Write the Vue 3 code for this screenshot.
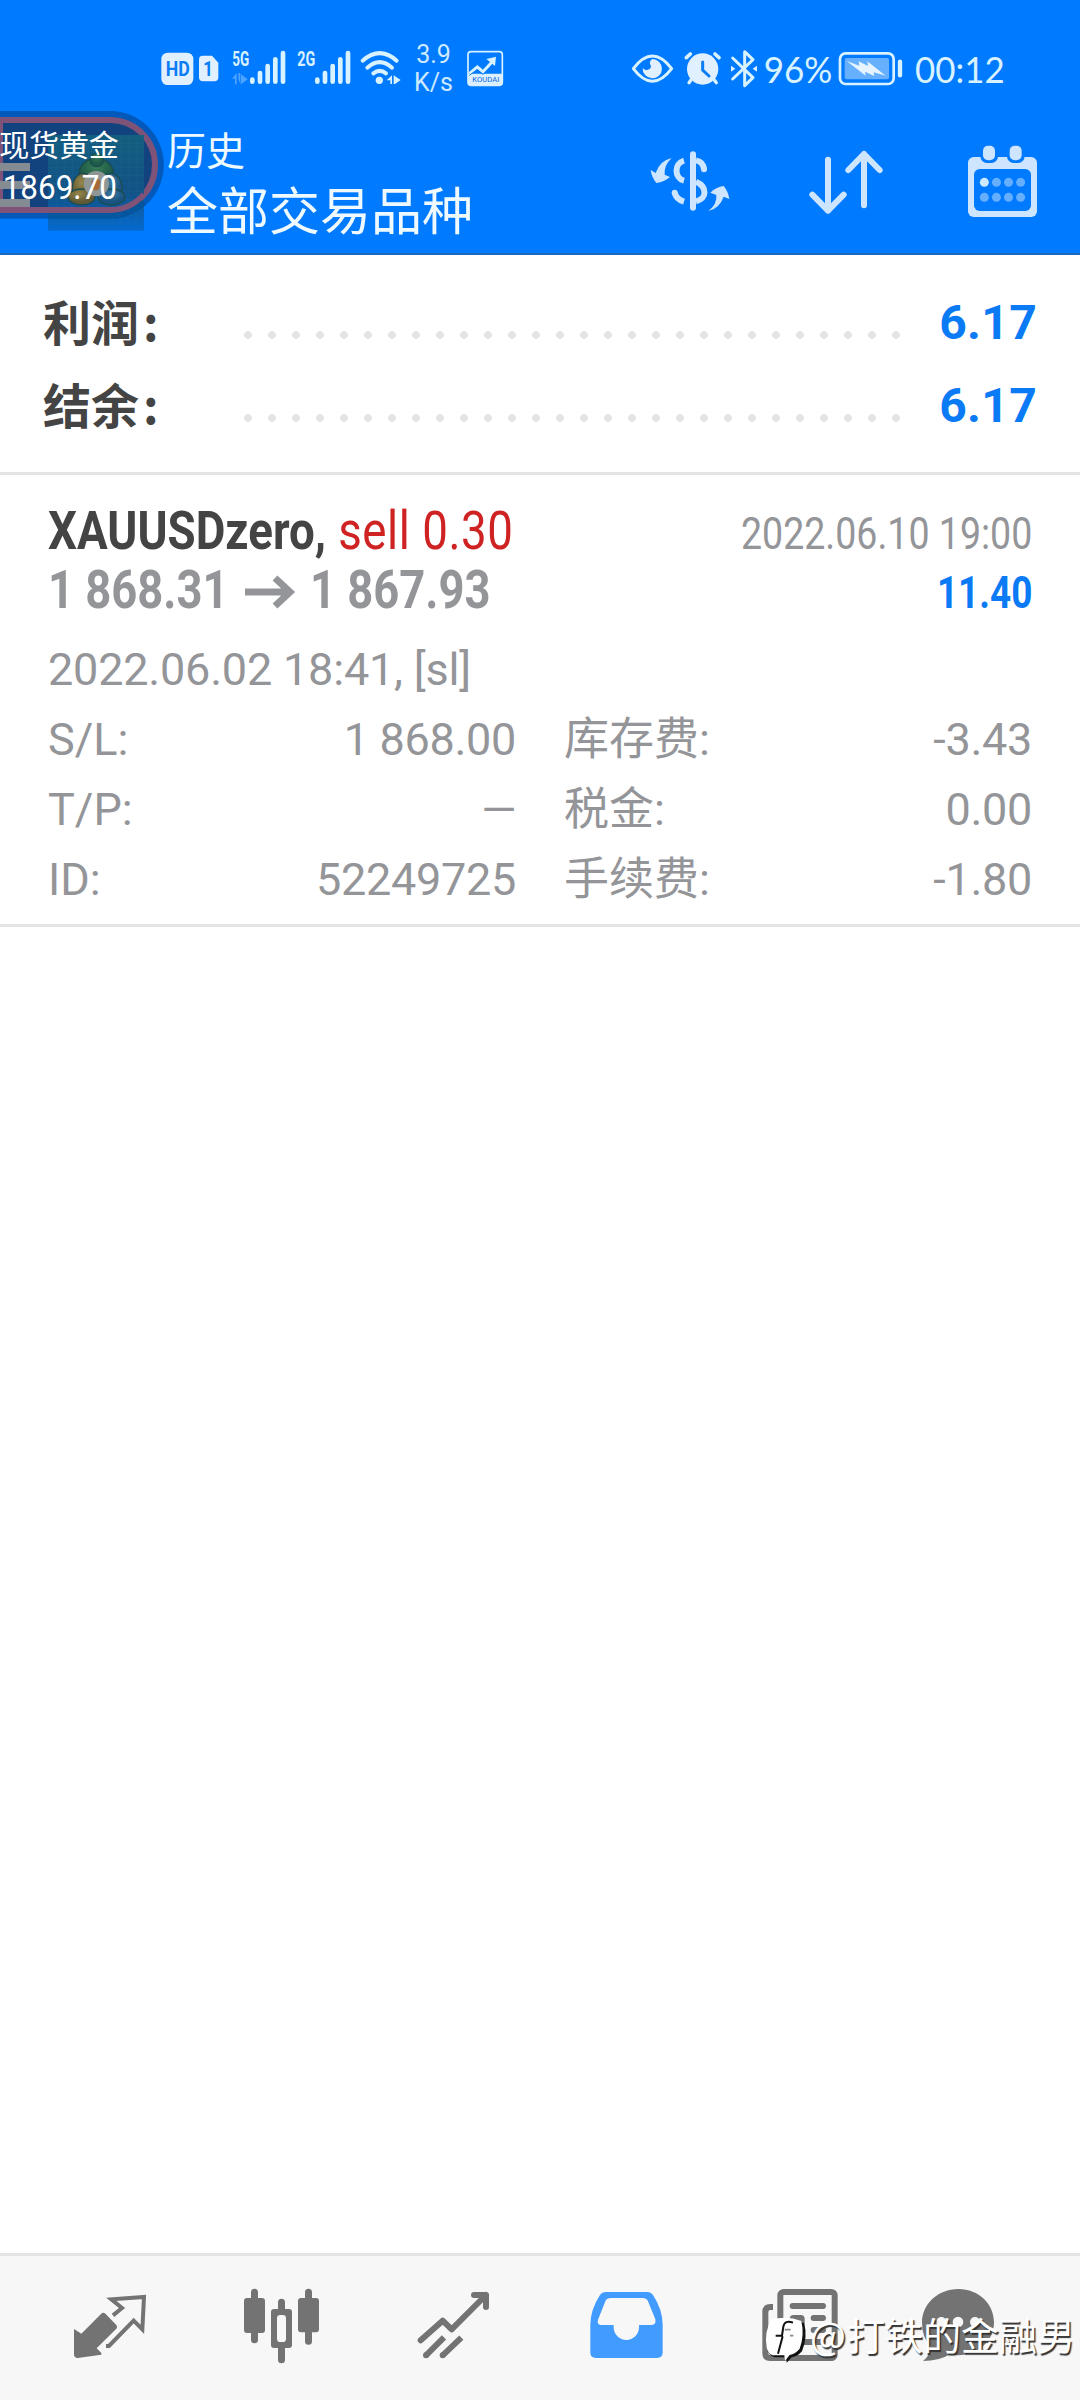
<script setup>
const summary = [
  { label: '利润', value: '6.17' },
  { label: '结余', value: '6.17' },
]
const details = [
  { k: 'S/L:', v: '1 868.00', k2: '库存费:', v2: '-3.43' },
  { k: 'T/P:', v: '—', k2: '税金:', v2: '0.00' },
  { k: 'ID:', v: '52249725', k2: '手续费:', v2: '-1.80' },
]
const bars = [330, 353, 376, 399, 422]
const barTops = [142, 122, 101, 81, 62]
</script>

<template>
  <div class="screen">
    <header class="top">
      <div class="status">
        <div class="cluster">
          <svg width="85" height="80" viewBox="0 0 255 240">
            <rect x="64" y="68" width="96" height="97" rx="19" fill="#e0f0ff" />
            <text x="77" y="138" textLength="72" lengthAdjust="spacingAndGlyphs" font-size="60" font-weight="700" fill="#0a7cf5">HD</text>
            <path d="M188 77h28l19 21v44q0 12-12 12h-34q-12 0-12-12V89q0-12 11-12z" fill="#e0f0ff" />
            <text x="190" y="139" font-size="62" font-weight="700" textLength="29" lengthAdjust="spacingAndGlyphs" fill="#0a7cf5">1</text>
          </svg>
          <svg width="65" height="80" viewBox="255 0 195 240">
            <text x="277" y="107" font-size="60" font-weight="700" textLength="51" lengthAdjust="spacingAndGlyphs" fill="#d8f2ff">5G</text>
            <path d="M276 146l14-17v34h-5v-17zM295 146v-17h6v34zM303 133l20 15-20 15z" fill="#4da3ff" />
            <rect v-for="(x, i) in bars" :key="x" :x="x" :y="barTops[i]" width="14" :height="162 - barTops[i]" rx="7" fill="#d8f2ff" />
          </svg>
          <svg width="65" height="80" viewBox="450 0 195 240">
            <text x="472" y="107" font-size="60" font-weight="700" textLength="54" lengthAdjust="spacingAndGlyphs" fill="#d8f2ff">2G</text>
            <rect v-for="(x, i) in bars" :key="x" :x="x + 195" :y="barTops[i]" width="14" :height="162 - barTops[i]" rx="7" fill="#d8f2ff" />
          </svg>
          <svg width="50" height="80" viewBox="645 0 150 240">
            <g fill="none" stroke="#d8f2ff" stroke-width="12" stroke-linecap="round">
              <path d="M668 92Q719 47 770 92" />
              <path d="M682 113Q719 80 756 113" />
              <path d="M700 130Q719 115 738 130" />
            </g>
            <circle cx="718" cy="151" r="11" fill="#d8f2ff" />
            <path d="M740 151l16-15v26h-5v-11zM761 136l21 14-17 12h-4z" fill="#d8f2ff" />
          </svg>
          <div class="speed"><span>3.9</span><span>K/s</span></div>
          <svg width="50" height="80" viewBox="960 0 150 240">
            <rect x="984" y="65" width="103" height="101" rx="9" fill="none" stroke="#d8f2ff" stroke-width="5" />
            <path d="M984 131h103v30q0 6-6 6h-91q-6 0-6-6z" fill="#dcefff" />
            <path d="M988 131l24-20 17 14 29-31" fill="none" stroke="#d8f2ff" stroke-width="9" />
            <path d="M1068 80l-3 28-26-21z" fill="#d8f2ff" />
            <path d="M988 136l23-17 17 14 9-6" fill="none" stroke="#0a7cf5" stroke-width="3" />
            <text x="997" y="157" font-size="23" textLength="81" lengthAdjust="spacingAndGlyphs" fill="#0a6be0">KOUDAI</text>
          </svg>
        </div>
        <div class="cluster">
          <svg width="60" height="80" viewBox="0 0 180 240">
            <path d="M40 116Q97 40 155 116Q97 192 40 116z" fill="none" stroke="#d8f2ff" stroke-width="9" stroke-linejoin="round" />
            <path d="M97 87a29 29 0 1 1-29 27q7 9 16 5 14-5 6-17-2-9 7-15z" fill="#e0f0ff" />
          </svg>
          <svg width="45" height="80" viewBox="180 0 135 240">
            <circle cx="248" cy="117" r="47" fill="#e0f0ff" />
            <path d="M199 83l12-11M285 72l12 11" stroke="#d8f2ff" stroke-width="11" stroke-linecap="round" />
            <path d="M213 150l-6 8M283 150l6 8" stroke="#d8f2ff" stroke-width="10" stroke-linecap="round" />
            <path d="M248 96v24l19 18" fill="none" stroke="#0a7cf5" stroke-width="9" stroke-linecap="round" />
          </svg>
          <svg width="35" height="80" viewBox="315 0 105 240">
            <path d="M338 84l61 59-25 24V65l25 24-61 58" fill="none" stroke="#d8f2ff" stroke-width="9" stroke-linecap="round" stroke-linejoin="round" />
            <path d="M333 107l13 9-13 9zM411 107l-13 9 13 9z" fill="#d8f2ff" />
          </svg>
          <svg width="75" height="80" viewBox="420 0 225 240">
            <text class="clock" x="431" y="160" font-size="112" textLength="206" lengthAdjust="spacingAndGlyphs">96%</text>
          </svg>
          <svg width="75" height="80" viewBox="645 0 225 240">
            <rect x="660" y="70" width="161" height="92" rx="17" fill="none" stroke="#d8f2ff" stroke-width="8" />
            <rect x="674" y="84" width="133" height="64" rx="6" fill="#66b0ff" />
            <path d="M680 93l38 14-2-13 28 14-2-14 55 43-36-10 2 11-28-13 2 12z" fill="#e6f4ff" />
            <path d="M840 95v41" stroke="#d8f2ff" stroke-width="13" stroke-linecap="round" />
          </svg>
          <svg width="100" height="80" viewBox="870 0 300 240">
            <text class="clock" x="885" y="160" font-size="112" textLength="269" lengthAdjust="spacingAndGlyphs">00:12</text>
          </svg>
        </div>
      </div>

      <div class="toolbar">
        <div class="titles">
          <span class="small">历史</span>
          <span class="large">全部交易品种</span>
        </div>
        <div class="actions">
          <svg width="153" height="140" viewBox="0 0 459 420" fill="none" stroke="#cde5ff">
            <path d="M192 122C162 130 162 174 192 182M164 218Q168 238 192 245" stroke-width="18" />
            <path d="M164 218h.1M219 103V263M252 148h.1" stroke-width="18" stroke-linecap="round" />
            <path d="M228 121Q250 125 252 148M228 185C262 200 262 236 228 244" stroke-width="18" />
            <path d="M155 114Q131 137 134 164l16 7q-17 15-41 18-14-17-17-39l15 9q12-37 48-45zM265 273q27-20 24-48l-18-7q17-17 40-20 14 17 17 39l-17-7q-12 35-46 43z" fill="#cde5ff" stroke="none" />
          </svg>
          <svg width="154" height="140" viewBox="459 0 462 420" fill="none" stroke="#cde5ff" stroke-width="18" stroke-linecap="round" stroke-linejoin="round">
            <path d="M624 119V272M577 224l47 48 47-48M732 256V102M685 150l47-48 47 48" />
          </svg>
          <svg width="153" height="140" viewBox="921 0 459 420">
            <rect x="1044" y="111" width="207" height="180" rx="17" fill="#cde5ff" />
            <rect x="1062" y="147" width="171" height="126" rx="17" fill="#007aff" />
            <rect x="1081" y="68" width="53" height="61" rx="20" fill="#007aff" />
            <rect x="1161" y="68" width="53" height="61" rx="20" fill="#007aff" />
            <rect x="1089" y="77" width="36" height="44" rx="15" fill="#cde5ff" />
            <rect x="1169" y="77" width="36" height="44" rx="15" fill="#cde5ff" />
            <circle v-for="n in 8" :key="n" :cx="1093 + ((n - 1) % 4) * 36.3" :cy="n > 4 ? 232 : 187" r="13.5" :fill="n === 1 ? '#cde9ff' : '#66afff'" />
          </svg>
        </div>
      </div>

      <div class="pill">
        <svg width="170" height="140" viewBox="0 0 510 420">
          <defs>
            <linearGradient id="tile" x1="0" y1="0" x2="0" y2="1">
              <stop offset="0" stop-color="#14607f" />
              <stop offset=".6" stop-color="#125488" />
              <stop offset="1" stop-color="#0568cb" />
            </linearGradient>
            <radialGradient id="gold" cx=".4" cy=".3"><stop offset="0" stop-color="#94854a" /><stop offset="1" stop-color="#5f5a35" /></radialGradient>
            <radialGradient id="green" cx=".5" cy=".3"><stop offset="0" stop-color="#387c55" /><stop offset="1" stop-color="#1d5a48" /></radialGradient>
            <radialGradient id="azure" cx=".5" cy=".3"><stop offset="0" stop-color="#3a769b" /><stop offset="1" stop-color="#195382" /></radialGradient>
          </defs>
          <path d="M0 33H330a161 161 0 0 1 0 323H0z" fill="#0359b9" />
          <path d="M0 60H330a135 135 0 0 1 0 270H0z" fill="#12437f" stroke="#7f5278" stroke-width="18" />
          <path d="M144 105H432V392H144z" fill="url(#tile)" opacity=".93" />
          <path d="M169 105V392M193 105V392M217 105V392M241 105V392M265 105V392M289 105V392M313 105V392M337 105V392M361 105V392M385 105V392M409 105V392M144 130H432M144 154H432M144 178H432M144 202H432M144 226H432M144 250H432M144 274H432M144 298H432M144 345H432M144 369H432" stroke="#2c84a5" stroke-width="1" opacity=".4" />
          <path d="M144 330H330A135 135 0 0 0 432 283" fill="none" stroke="#7f5278" stroke-width="18" />
          <path d="M144 348H330A152 152 0 0 0 432 307" fill="none" stroke="#035299" stroke-width="17" opacity=".7" />
          <g stroke="#1b4c50" stroke-width="4">
            <ellipse cx="289" cy="219" rx="51" ry="44" fill="url(#green)" />
            <circle cx="290" cy="180" r="20" fill="url(#green)" />
            <ellipse cx="251" cy="264" rx="34" ry="44" fill="url(#gold)" />
            <ellipse cx="332" cy="264" rx="34" ry="44" fill="url(#azure)" />
            <ellipse cx="245" cy="291" rx="40" ry="24" fill="url(#gold)" />
            <ellipse cx="334" cy="291" rx="40" ry="24" fill="url(#azure)" />
          </g>
          <circle cx="289" cy="251" r="38" fill="#8f9696" />
          <path d="M274 244q16-14 28 0l-5 24q-12 8-22-3z" fill="#a56a3c" />
          <path d="M0 189H90V213H0zM0 243H90V267H0zM0 297H90V321H0z" fill="#858b92" />
          <text x="-2" y="168" font-size="90" textLength="358" fill="#fff" class="cjk">现货黄金</text>
          <text x="8" y="297" font-size="99" textLength="343" lengthAdjust="spacingAndGlyphs" fill="#fff">1869.70</text>
        </svg>
      </div>
    </header>

    <section class="summary">
      <div v-for="row in summary" :key="row.label" class="sum-row">
        <span class="sum-label">{{ row.label }}<span class="colon">:</span></span>
        <span class="leader"></span>
        <span class="sum-value">{{ row.value }}</span>
      </div>
    </section>

    <section class="deal">
      <div class="line first">
        <span class="symbol"><b>XAUUSDzero,</b> <i>sell 0.30</i></span>
        <span class="closed">2022.06.10 19:00</span>
      </div>
      <div class="line second">
        <span class="prices"><span class="from">1 868.31</span>
          <svg width="50" height="36" viewBox="0 0 50 36"><path d="M0 18H44M30 4l15 14-15 14" fill="none" stroke="#949599" stroke-width="7" /></svg>
          <span class="to">1 867.93</span></span>
        <span class="gain">11.40</span>
      </div>
      <div class="opened">2022.06.02 18:41, [sl]</div>
      <div v-for="d in details" :key="d.k" class="detail">
        <span>{{ d.k }}</span><span class="num">{{ d.v }}</span>
        <span class="fee">{{ d.k2 }}</span><span class="num">{{ d.v2 }}</span>
      </div>
    </section>

    <main class="blank"></main>

    <nav class="tabs">
      <svg width="172" height="144" viewBox="72 48 516 432">
        <path d="M222 267l22 14 59-59q7-7 14 0l32 33q5 6 0 11l-59 59 14 14v5l-71 10q-11 0-11-11z" fill="#737373" />
        <path d="M339 226l27-22-32-26 98-7-5 97-26-26-74 76h-9" fill="none" stroke="#737373" stroke-width="12" />
      </svg>
      <svg width="172" height="144" viewBox="588 48 516 432">
        <path d="M763.500 157V299M925.500 157V304M844.500 187V359" stroke="#737373" stroke-width="21" stroke-linecap="round" />
        <rect x="732" y="174" width="63" height="105" rx="9" fill="#737373" />
        <rect x="894" y="174" width="63" height="103" rx="9" fill="#737373" />
        <rect x="813" y="207" width="63" height="117" rx="9" fill="#737373" />
        <rect x="831" y="225" width="27" height="81" rx="10" fill="#f7f7f7" />
      </svg>
      <svg width="172" height="144" viewBox="24 48 516 432" fill="none" stroke="#737373" stroke-width="18">
        <path d="M182 301l66-59 27 26L378 165M342 165h36v36" stroke-linecap="round" stroke-linejoin="round" />
        <path d="M252 292l-54 54M304 293l-56 53" />
        <path d="M198 346h.1M248 346h.1" stroke-linecap="round" />
      </svg>
      <svg width="172" height="144" viewBox="540 48 516 432">
        <path d="M736 156H863Q873 156 879 165Q908 209 908 255V337Q908 354 891 354H708Q691 354 691 337V255Q691 209 720 165Q726 156 736 156z" fill="#429bff" />
        <path d="M753 174H847Q860 174 864 184L886 238Q889 255 875 255H837V262A38 38 0 0 1 761 262V255H725Q710 255 714 239L736 184Q740 174 753 174z" fill="#f7f7f7" />
      </svg>
      <svg width="172" height="144" viewBox="-24 48 516 432" fill="none" stroke="#737373" stroke-width="18">
        <rect x="181" y="156" width="163" height="198" rx="10" />
        <path d="M159 201h-8q-15 0-15 15V340q0 14 14 14H190" />
        <path d="M218 198H309M281 234H309M281 270H309M218 306H309" stroke-linecap="round" />
        <rect x="218" y="234" width="27" height="37" rx="3" fill="#737373" />
      </svg>
      <svg width="172" height="144" viewBox="492 48 516 432">
        <path d="M715 147C777 147 822 192 822 247S775 346 714 346Q704 346 690 343Q658 363 609 363Q629 349 632 321Q606 293 606 247C606 192 654 147 715 147z" fill="#737373" />
        <g fill="#f7f7f7"><circle cx="664" cy="246" r="15" /><circle cx="714" cy="246" r="16" /><circle cx="765" cy="246" r="15" /></g>
      </svg>
    </nav>

    <div class="watermark">
      <svg width="50" height="50" viewBox="0 0 150 150">
        <path d="M38 20Q85 6 132 24Q144 64 126 109Q112 125 95 127L80 143L79 127H44Q25 120 21 102Q16 56 38 20z" fill="#111" />
        <path d="M34 14Q80 0 124 18Q134 60 119 101Q106 117 89 120L75 137L73 121H38Q24 116 20 98Q12 50 34 14z" fill="#fff" />
        <path d="M99 23Q74 14 70 35L66 62H47M68 64L54 116" fill="none" stroke="#111" stroke-width="6" />
        <path d="M74 44h18M90 62h10" stroke="#888" stroke-width="5" />
      </svg>
      <span class="at">@</span><span>打铁的金融男</span>
    </div>
  </div>
</template>

<style>
body { margin: 0; background: #fff; }
</style>

<style scoped>
.screen { position: relative; width: 1080px; height: 2400px; display: flex; flex-direction: column; overflow: hidden; background: #fff; font-family: Roboto, "Noto Sans CJK SC", sans-serif; }
svg { display: block; flex: none; overflow: visible; }
.top { position: relative; height: 255px; box-sizing: border-box; background: #007aff; border-bottom: 2px solid #1b69bd; flex: none; }
.status { display: flex; justify-content: space-between; padding: 30px 70px 0 140px; height: 80px; }
.cluster { display: flex; }
.clock { font-family: Lato, Roboto, sans-serif; fill: #d8f2ff; }
.speed { width: 55px; height: 80px; display: flex; flex-direction: column; align-items: center; padding: 11px 0 0 2px; box-sizing: border-box; color: #cdeaff; font-size: 25px; line-height: 28px; }
.toolbar { display: flex; justify-content: space-between; height: 143px; }
.titles { display: flex; flex-direction: column; padding: 12px 0 0 167px; color: #eefaff; font-family: "Noto Sans CJK SC", sans-serif; white-space: nowrap; }
.small { font-size: 39px; line-height: 52px; }
.large { font-size: 51px; line-height: 68px; }
.actions { display: flex; margin-top: 10px; }
.pill { position: absolute; left: 0; top: 100px; }
.cjk { font-family: "Noto Sans CJK SC", sans-serif; }

.summary { height: 217px; border-bottom: 3px solid #e4e4e4; padding: 0 43px 0 43px; flex: none; display: flex; flex-direction: column; }
.sum-row { height: 83px; display: flex; align-items: center; justify-content: space-between; }
.sum-row:first-child { margin-top: 27px; }
.sum-label { width: 201px; margin-top: -8px; font: 700 48px/72px "Noto Sans CJK SC", sans-serif; color: #444; }
.colon { margin-left: 4px; }
.leader { width: 672px; height: 8px; margin-top: 22px; flex: none; background: radial-gradient(circle at 4px 4px, #e4e4e4 3.500px, transparent 4.200px) 0 0 / 24px 8px repeat-x; }
.sum-value { width: 121px; margin-top: -2px; text-align: right; font: 700 48px/72px Roboto, sans-serif; letter-spacing: .3px; color: #0a7af5; }

.deal { height: 449px; border-bottom: 3px solid #e4e4e4; padding: 0 48px; color: #949599; font-size: 45px; flex: none; }
.line { display: flex; justify-content: space-between; align-items: baseline; white-space: nowrap; }
.first { height: 59px; line-height: 64px; margin-top: 24px; }
.second { height: 59px; line-height: 64px; }
.symbol, .prices { transform-origin: 0 50%; font-size: 54px; }
.symbol { transform: scaleX(.846); color: #444; }
.symbol i { font-style: normal; color: #cf2222; letter-spacing: .65px; margin-left: 1px; }
.closed { transform: scaleX(.834); transform-origin: 100% 50%; }
.prices { display: flex; align-items: center; font-weight: 700; color: #949599; }
.from, .to { display: inline-block; transform: scaleX(.84); transform-origin: 0 50%; width: 178px; }
.prices svg { margin: 3px 15px 0 19px; }
.gain { font-weight: 700; color: #0a7af5; transform: scaleX(.82); transform-origin: 100% 50%; }
.opened { height: 70px; line-height: 70px; margin-top: 18px; letter-spacing: -.2px; }
.detail { display: grid; grid-template-columns: 120px 348px 248px 268px; height: 70px; line-height: 70px; }
.detail span { white-space: nowrap; }
.num { text-align: right; letter-spacing: -.3px; }
.fee { padding-left: 48px; }
.blank { flex: 1; }
.tabs { height: 144px; border-top: 3px solid #e4e4e4; background: #f7f7f7; padding: 0 24px; display: flex; flex: none; }
.watermark { position: absolute; left: 760px; top: 2312px; display: flex; align-items: flex-start; height: 50px; color: #fff; font: 38px/44px "Noto Sans CJK SC", sans-serif; text-shadow: 1.500px 1.500px 1px #333; white-space: nowrap; }
.watermark svg { margin-top: 3px; }
.watermark .at { width: 37px; }
</style>
